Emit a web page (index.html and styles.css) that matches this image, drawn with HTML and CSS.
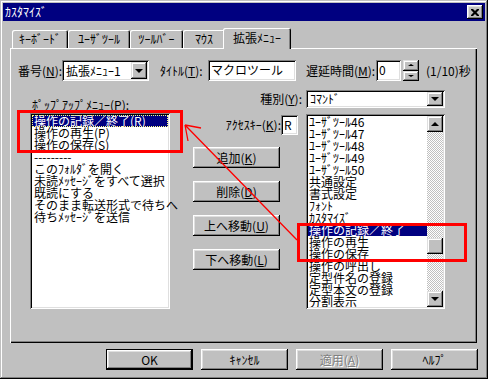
FILE: index.html
```html
<!DOCTYPE html>
<html>
<head>
  <meta charset="UTF-8">
  <link rel="stylesheet" href="styles.css">
</head>
<body>
  <div class="window">
    <div class="titlebar">
      <span class="title">ｶｽﾀﾏｲｽﾞ</span>
      <span class="close-btn">
        <svg width="8" height="7" viewBox="0 0 8 7"><path d="M0 0h2l2 2 2-2h2v1L5.5 3.5 8 6v1H6L4 5 2 7H0V6l2.5-2.5L0 1z" fill="#000"/></svg>
      </span>
    </div>

    <div class="tabs">
      <div class="tab tab-kb">ｷｰﾎﾞｰﾄﾞ</div>
      <div class="tab tab-user">ﾕｰｻﾞﾂｰﾙ</div>
      <div class="tab tab-bar">ﾂｰﾙﾊﾞｰ</div>
      <div class="tab tab-mouse">ﾏｳｽ</div>
      <div class="tab tab-active">拡張ﾒﾆｭｰ</div>
    </div>

    <div class="panel">
      <div class="row-top">
        <span class="lbl-num">番号(<u>N</u>):</span>
        <div class="combo combo-num">
          <span class="combo-text">拡張ﾒﾆｭｰ1</span>
          <span class="arrow-btn"><span class="tri-down"></span></span>
        </div>
        <span class="lbl-title">ﾀｲﾄﾙ(<u>T</u>):</span>
        <div class="field field-title">マクロツール</div>
        <span class="lbl-delay">遅延時間(<u>M</u>):</span>
        <div class="field field-delay">0</div>
        <div class="spinner">
          <span class="spin-btn"><span class="tri-up small"></span></span>
          <span class="spin-btn"><span class="tri-down small"></span></span>
        </div>
        <span class="unit">(1/10)秒</span>
      </div>

      <div class="row-main">
        <div class="col-left">
          <div class="lbl-popup">ﾎﾟｯﾌﾟｱｯﾌﾟﾒﾆｭｰ(P):</div>
          <div class="listbox left-list">
            <div class="item selected focused">操作の記録／終了(R)</div>
            <div class="item">操作の再生(P)</div>
            <div class="item">操作の保存(S)</div>
            <div class="item">---------</div>
            <div class="item">このﾌｫﾙﾀﾞを開く</div>
            <div class="item">未読ﾒｯｾｰｼﾞをすべて選択</div>
            <div class="item">既読にする</div>
            <div class="item">そのまま転送形式で待ちへ</div>
            <div class="item">待ちﾒｯｾｰｼﾞを送信</div>
          </div>
        </div>

        <div class="col-right">
          <div class="row-kind">
            <span class="lbl-kind">種別(<u>Y</u>):</span>
            <div class="combo combo-kind">
              <span class="combo-text">ｺﾏﾝﾄﾞ</span>
              <span class="arrow-btn"><span class="tri-down"></span></span>
            </div>
          </div>
          <div class="row-lower">
            <div class="col-mid">
              <div class="row-key">
                <span>ｱｸｾｽｷｰ(<u>K</u>):</span>
                <div class="field field-key">R</div>
              </div>
              <button class="btn btn-side">追加(<u>K</u>)</button>
              <button class="btn btn-side">削除(<u>D</u>)</button>
              <button class="btn btn-side">上へ移動(<u>U</u>)</button>
              <button class="btn btn-side">下へ移動(<u>L</u>)</button>
            </div>
            <div class="listbox right-list">
              <div class="items">
                <div class="item">ﾕｰｻﾞﾂｰﾙ46</div>
                <div class="item">ﾕｰｻﾞﾂｰﾙ47</div>
                <div class="item">ﾕｰｻﾞﾂｰﾙ48</div>
                <div class="item">ﾕｰｻﾞﾂｰﾙ49</div>
                <div class="item">ﾕｰｻﾞﾂｰﾙ50</div>
                <div class="item">共通設定</div>
                <div class="item">書式設定</div>
                <div class="item">ﾌｫﾝﾄ</div>
                <div class="item">ｶｽﾀﾏｲｽﾞ</div>
                <div class="item selected">操作の記録／終了</div>
                <div class="item">操作の再生</div>
                <div class="item">操作の保存</div>
                <div class="item">操作の呼出し</div>
                <div class="item">定型件名の登録</div>
                <div class="item">定型本文の登録</div>
                <div class="item">分割表示</div>
              </div>
              <div class="vscroll">
                <span class="sb-btn"><span class="tri-up"></span></span>
                <span class="track track-top"></span>
                <span class="sb-thumb"></span>
                <span class="track track-rest"></span>
                <span class="sb-btn"><span class="tri-down"></span></span>
              </div>
            </div>
          </div>
        </div>
      </div>
    </div>

    <div class="footer">
      <button class="btn btn-foot btn-default">OK</button>
      <button class="btn btn-foot">ｷｬﾝｾﾙ</button>
      <button class="btn btn-foot disabled">適用(<u>A</u>)</button>
      <button class="btn btn-foot">ﾍﾙﾌﾟ</button>
    </div>

    <!-- red markup drawn over the screenshot -->
    <svg class="annot" width="488" height="379" viewBox="0 0 488 379">
      <rect x="18.5" y="111.5" width="163" height="40" fill="none" stroke="#f00" stroke-width="3"/>
      <rect x="298.5" y="224.5" width="167" height="36" fill="none" stroke="#f00" stroke-width="3"/>
      <path d="M297 240L185 125M185 125L201 128M185 125L188 141" fill="none" stroke="#f00" stroke-width="1.3"/>
    </svg>
  </div>
</body>
</html>
```

FILE: styles.css
```css
* {
  box-sizing: border-box;
}
body {
  margin: 0;
  font-family: "Noto Sans CJK JP", sans-serif;
  font-size: 12px;
  line-height: 12px;
  color: #000;
  white-space: nowrap;
}
u {
  text-underline-offset: 1px;
}

/* window frame */
.window {
  position: relative;
  width: 488px;
  height: 379px;
  padding: 3px;
  background: #c0c0c0;
  display: flex;
  flex-direction: column;
  box-shadow: inset -1px -1px #000, inset 1px 1px #c0c0c0, inset -2px -2px #808080, inset 2px 2px #fff;
}
.titlebar {
  height: 18px;
  background: #000080;
  color: #fff;
  display: flex;
  align-items: center;
  justify-content: space-between;
  padding: 0 2px 0 2px;
}
.close-btn {
  width: 16px;
  height: 14px;
  background: #c0c0c0;
  display: flex;
  align-items: center;
  justify-content: center;
  box-shadow: inset -1px -1px #000, inset 1px 1px #fff, inset -2px -2px #808080, inset 2px 2px #dfdfdf;
}

/* tabs */
.tabs {
  height: 27px;
  display: flex;
  align-items: flex-end;
  padding-left: 9px;
  position: relative;
  z-index: 1;
}
.tab {
  height: 18px;
  display: flex;
  align-items: center;
  justify-content: center;
  background: #c0c0c0;
  border-radius: 2px 2px 0 0;
  box-shadow: inset 1px 1px #fff, inset -1px 0 #000, inset -2px 0 #808080;
}
.tab-kb { width: 56px; }
.tab-user { width: 62px; }
.tab-bar { width: 53px; }
.tab-mouse { width: 42px; }
.tab-active {
  width: 68px;
  height: 21px;
  margin-left: -2px;
  margin-bottom: -1px;
  padding-bottom: 2px;
}

/* tab page */
.panel {
  height: 295px;
  margin: 0 8px 0 7px;
  padding: 12px 0 0 8px;
  box-shadow: inset 1px 1px #fff, inset -1px -1px #000, inset -2px -2px #808080;
}
.row-top {
  display: flex;
  align-items: center;
  height: 21px;
}
.lbl-num { width: 44px; }
.lbl-title { width: 48px; margin-left: 11px; }
.lbl-delay { width: 70px; margin-left: 10px; }
.unit { margin-left: 7px; }

.field, .combo, .listbox {
  background: #fff;
  box-shadow: inset 1px 1px #808080, inset -1px -1px #fff, inset 2px 2px #000, inset -2px -2px #dfdfdf;
}
.field {
  height: 21px;
  padding: 4px 3px 0 3px;
}
.field-title { width: 88px; }
.field-delay { width: 25px; }
.field-key { width: 17px; height: 20px; margin-right: 1px; }

.combo {
  display: flex;
  align-items: center;
  padding: 2px;
}
.combo-num { width: 87px; height: 21px; }
.combo-kind { width: 139px; height: 18px; margin-left: 4px; }
.combo-text {
  flex: 1;
  padding-left: 2px;
}
.arrow-btn, .sb-btn, .spin-btn {
  display: flex;
  align-items: center;
  justify-content: center;
  background: #c0c0c0;
  box-shadow: inset -1px -1px #000, inset 1px 1px #dfdfdf, inset -2px -2px #808080, inset 2px 2px #fff;
}
.arrow-btn {
  width: 16px;
  align-self: stretch;
}
.tri-down, .tri-up {
  width: 0;
  height: 0;
  border-left: 4px solid transparent;
  border-right: 4px solid transparent;
}
.tri-down { border-top: 4px solid #000; }
.tri-up { border-bottom: 4px solid #000; }
.tri-down.small, .tri-up.small {
  border-left-width: 3px;
  border-right-width: 3px;
}
.tri-down.small { border-top-width: 2px; }
.tri-up.small { border-bottom-width: 2px; }

.spinner {
  width: 16px;
  height: 21px;
  margin-left: 2px;
  display: flex;
  flex-direction: column;
}
.spin-btn {
  flex: 1;
}

/* main area */
.row-main {
  display: flex;
  margin: 9px 0 0 12px;
}
.col-left {
  width: 140px;
  padding-top: 9px;
}
.lbl-popup {
  height: 12px;
  padding-left: 2px;
  margin-bottom: 2px;
}
.listbox {
  padding: 2px;
}
.left-list {
  height: 196px;
}
.item {
  height: 12px;
  padding-left: 2px;
}
.item.selected {
  background: #000080;
  color: #fff;
}
.item.focused {
  outline: 1px dotted #ffff80;
  outline-offset: -1px;
}

.col-right {
  width: 252px;
  margin-left: 23px;
}
.row-kind {
  display: flex;
  justify-content: flex-end;
  align-items: center;
  height: 18px;
}
.row-lower {
  display: flex;
  margin-top: 6px;
}
.col-mid {
  width: 106px;
  display: flex;
  flex-direction: column;
}
.row-key {
  display: flex;
  justify-content: flex-end;
  align-items: center;
  height: 20px;
  margin-top: 1px;
  margin-bottom: 12px;
}
.right-list {
  width: 139px;
  height: 195px;
  margin-left: 7px;
  display: flex;
}
.right-list .items {
  flex: 1;
  overflow: hidden;
}
.right-list .item {
  padding-left: 1px;
}
.vscroll {
  width: 16px;
  display: flex;
  flex-direction: column;
}
.sb-btn {
  height: 16px;
}
.track {
  background-color: #fff;
  background-image: repeating-conic-gradient(#c0c0c0 0 25%, #fff 0 50%);
  background-size: 2px 2px;
}
.track-top { height: 106px; }
.track-rest { flex: 1; }
.sb-thumb {
  height: 16px;
  background: #c0c0c0;
  box-shadow: inset -1px -1px #000, inset 1px 1px #dfdfdf, inset -2px -2px #808080, inset 2px 2px #fff;
}

/* buttons */
.btn {
  font: inherit;
  color: #000;
  border: 0;
  padding: 0;
  background: #c0c0c0;
  height: 21px;
  width: 87px;
  box-shadow: inset -1px -1px #000, inset 1px 1px #fff, inset -2px -2px #808080, inset 2px 2px #dfdfdf;
}
.btn-side {
  margin-bottom: 13px;
}
.btn-default {
  border: 1px solid #000;
}
.btn.disabled {
  color: #808080;
  text-shadow: 1px 1px #fff;
}
.footer {
  display: flex;
  justify-content: flex-end;
  gap: 8px;
  margin-top: 6px;
  padding-right: 7px;
}

.annot {
  position: absolute;
  left: 0;
  top: 0;
  pointer-events: none;
}
```
